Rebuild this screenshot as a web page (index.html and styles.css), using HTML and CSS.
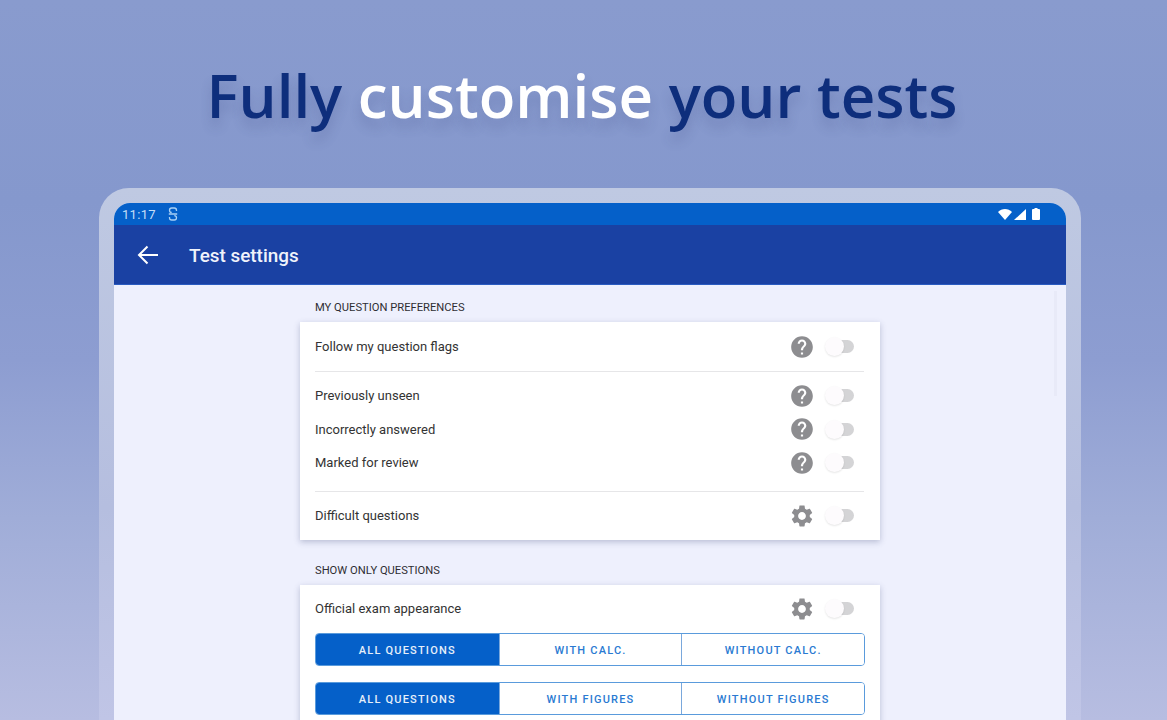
FILE: index.html
```html
<!DOCTYPE html>
<html lang="en">
<head>
    <meta charset="UTF-8">
    <meta name="viewport" content="width=device-width, initial-scale=1.0">
    <title>Test settings</title>
    <link rel="stylesheet" href="styles.css">
</head>
<body>
    <svg class="icon-defs" width="0" height="0">
        <symbol id="help" viewBox="0 0 24 24">
            <path d="M12 2C6.48 2 2 6.48 2 12s4.48 10 10 10 10-4.48 10-10S17.52 2 12 2zm1 17h-2v-2h2v2zm2.07-7.75l-.9.92C13.45 12.9 13 13.5 13 15h-2v-.5c0-1.1.45-2.1 1.17-2.83l1.24-1.26c.37-.36.59-.86.59-1.41 0-1.1-.9-2-2-2s-2 .9-2 2H8c0-2.21 1.79-4 4-4s4 1.79 4 4c0 .88-.36 1.68-.93 2.25z"/>
        </symbol>
        <symbol id="gear" viewBox="0 0 24 24">
            <path d="M19.14 12.94c.04-.3.06-.61.06-.94 0-.32-.02-.64-.07-.94l2.03-1.58c.18-.14.23-.41.12-.61l-1.92-3.32c-.12-.22-.37-.29-.59-.22l-2.39.96c-.5-.38-1.03-.7-1.62-.94l-.36-2.54c-.04-.24-.24-.41-.48-.41h-3.84c-.24 0-.43.17-.47.41l-.36 2.54c-.59.24-1.13.57-1.62.94l-2.39-.96c-.22-.08-.47 0-.59.22L2.74 8.87c-.12.21-.08.47.12.61l2.03 1.58c-.05.3-.09.63-.09.94s.02.64.07.94l-2.03 1.58c-.18.14-.23.41-.12.61l1.92 3.32c.12.22.37.29.59.22l2.39-.96c.5.38 1.03.7 1.62.94l.36 2.54c.05.24.24.41.48.41h3.84c.24 0 .44-.17.47-.41l.36-2.54c.59-.24 1.13-.56 1.62-.94l2.39.96c.22.08.47 0 .59-.22l1.92-3.32c.12-.22.07-.47-.12-.61l-2.01-1.58zM12 15.6c-1.98 0-3.6-1.62-3.6-3.6s1.62-3.6 3.6-3.6 3.6 1.62 3.6 3.6-1.62 3.6-3.6 3.6z"/>
        </symbol>
    </svg>

    <header class="hero">
        <h1><span class="dark">Fully</span> customise <span class="dark">your tests</span></h1>
    </header>

    <div class="tablet">
        <div class="screen">
            <div class="status-bar">
                <div class="status-left">
                    <span>11:17</span>
                    <svg class="status-s" viewBox="0 0 10 14" width="10" height="14">
                        <path d="M8.5 4V3.2C8.5 2 7.5 1 6.3 1H3.7C2.5 1 1.5 2 1.5 3.2S2.5 5.4 3.7 5.4M1.5 10v.8C1.5 12 2.5 13 3.7 13h2.6c1.200 0 2.200-1 2.200-2.200S7.500 8.600 6.300 8.600M.8 7h8.400" fill="none" stroke="#a9d0f5" stroke-width="1.3"/>
                    </svg>
                </div>
                <div class="status-right">
                    <svg class="wifi" viewBox="0 0 14 11" width="14" height="11"><path d="M0 3C1.900 1.100 4.300 0 7 0s5.100 1.100 7 3L7 11z" fill="#fff"/></svg>
                    <svg class="signal" viewBox="0 0 12 11" width="12" height="11"><path d="M12 0v11H0z" fill="#fff"/></svg>
                    <svg viewBox="0 0 8 12" width="8" height="12"><path d="M2.500 0h3v1H7a1 1 0 0 1 1 1v9a1 1 0 0 1-1 1H1a1 1 0 0 1-1-1V2a1 1 0 0 1 1-1h1.500z" fill="#fff"/></svg>
                </div>
            </div>

            <div class="app-bar">
                <svg class="back" viewBox="0 0 24 24" width="24" height="24">
                    <path d="M22 12H3.500M11.500 3.500L3 12l8.500 8.500" fill="none" stroke="#fff" stroke-width="2"/>
                </svg>
                <span class="app-title">Test settings</span>
            </div>

            <main class="content">
                <div class="column">
                    <h2 class="section-label">MY QUESTION PREFERENCES</h2>
                    <section class="card">
                        <div class="row row-single">
                            <span>Follow my question flags</span>
                            <div class="controls">
                                <svg class="ctl-icon"><use href="#help"/></svg>
                                <span class="switch"></span>
                            </div>
                        </div>
                        <hr>
                        <div class="group">
                            <div class="row">
                                <span>Previously unseen</span>
                                <div class="controls">
                                    <svg class="ctl-icon"><use href="#help"/></svg>
                                    <span class="switch"></span>
                                </div>
                            </div>
                            <div class="row">
                                <span>Incorrectly answered</span>
                                <div class="controls">
                                    <svg class="ctl-icon"><use href="#help"/></svg>
                                    <span class="switch"></span>
                                </div>
                            </div>
                            <div class="row">
                                <span>Marked for review</span>
                                <div class="controls">
                                    <svg class="ctl-icon"><use href="#help"/></svg>
                                    <span class="switch"></span>
                                </div>
                            </div>
                        </div>
                        <hr>
                        <div class="row row-last">
                            <span>Difficult questions</span>
                            <div class="controls">
                                <svg class="ctl-icon"><use href="#gear"/></svg>
                                <span class="switch"></span>
                            </div>
                        </div>
                    </section>

                    <h2 class="section-label section-second">SHOW ONLY QUESTIONS</h2>
                    <section class="card card-open">
                        <div class="row row-top">
                            <span>Official exam appearance</span>
                            <div class="controls">
                                <svg class="ctl-icon"><use href="#gear"/></svg>
                                <span class="switch"></span>
                            </div>
                        </div>
                        <div class="segments">
                            <button class="active">ALL QUESTIONS</button>
                            <button>WITH CALC.</button>
                            <button>WITHOUT CALC.</button>
                        </div>
                        <div class="segments">
                            <button class="active">ALL QUESTIONS</button>
                            <button>WITH FIGURES</button>
                            <button>WITHOUT FIGURES</button>
                        </div>
                    </section>
                </div>
                <div class="scrollbar"></div>
            </main>
        </div>
    </div>
</body>
</html>
```

FILE: styles.css
```css
body {
    margin: 0;
    height: 720px;
    overflow: hidden;
    font-family: Roboto, sans-serif;
    background: linear-gradient(180deg, #899bce 0%, #8598cd 28%, #8d9dd1 50%, #a0add8 72%, #b7bde1 100%);
}
.icon-defs {
    position: absolute;
}
.hero {
    height: 188px;
    box-sizing: border-box;
    padding-top: 59px;
    text-align: center;
}
.hero h1 {
    margin: 0 3px 0 0;
    font-family: "Open Sans", sans-serif;
    font-size: 60px;
    line-height: 72px;
    font-weight: 600;
    color: #fff;
    text-shadow: 0 9px 12px rgba(50, 60, 120, 0.2);
}
.hero .dark {
    color: #0e2e7c;
}
.tablet {
    width: 982px;
    margin-left: 99px;
    box-sizing: border-box;
    padding: 15px 15px 0;
    height: 532px;
    background: linear-gradient(180deg, #bfc9e2 0%, #b5bedf 60%, #c0c5e6 100%);
    border-radius: 30px 30px 0 0;
}
.screen {
    height: 100%;
    display: flex;
    flex-direction: column;
    border-radius: 16px 16px 0 0;
    overflow: hidden;
    background: #eef0fd;
}
.status-bar {
    flex: 0 0 22px;
    display: flex;
    justify-content: space-between;
    align-items: center;
    padding: 0 26px 0 8px;
    background: #0560c9;
    color: #c5def7;
    font-size: 13px;
    letter-spacing: 0.3px;
}
.status-left {
    display: flex;
    align-items: center;
    gap: 12px;
}
.status-right {
    display: flex;
    align-items: center;
}
.wifi {
    margin-right: 2px;
}
.signal {
    margin-right: 6px;
}
.app-bar {
    flex: 0 0 60px;
    display: flex;
    align-items: center;
    box-sizing: border-box;
    padding-left: 22px;
    background: #1a41a3;
    border-bottom: 1px solid #2a5bc0;
}
.back {
    margin-right: 29px;
}
.app-title {
    padding-top: 2px;
    color: #f0f3fb;
    font-size: 18.9px;
    font-weight: 500;
}
.content {
    flex: 1;
    position: relative;
    display: flex;
    justify-content: center;
}
.column {
    width: 580px;
}
.section-label {
    margin: 0;
    height: 37px;
    box-sizing: border-box;
    padding: 16px 0 0 15px;
    font-size: 11.2px;
    line-height: 14px;
    font-weight: 400;
    color: #2e2e33;
}
.section-second {
    height: 45px;
    padding-top: 24px;
}
.card {
    background: #fff;
    box-shadow: 0 2px 6px rgba(60, 70, 120, 0.3);
    padding: 0 15px;
    height: 218px;
    box-sizing: border-box;
    font-size: 13px;
    color: #333;
}
.card-open {
    height: auto;
    padding-bottom: 20px;
}
.row {
    height: 33.5px;
    display: flex;
    justify-content: space-between;
    align-items: center;
}
.row-single {
    height: 49px;
}
.row-last {
    height: 48px;
}
.row-top {
    height: 48px;
    padding-bottom: 1px;
    box-sizing: border-box;
}
.card hr {
    margin: 0 1px 0 0;
    border: 0;
    border-top: 1px solid #e6e6e8;
}
.group {
    padding: 7px 0 11px;
}
.controls {
    display: flex;
    align-items: center;
    gap: 11px;
    margin-right: 11px;
}
.ctl-icon {
    width: 26px;
    height: 26px;
    fill: #8d8d90;
}
.switch {
    position: relative;
    display: block;
    width: 28px;
    height: 13px;
    border-radius: 7px;
    background: #d4d4d6;
}
.switch::before {
    content: "";
    position: absolute;
    left: -1px;
    top: -3px;
    width: 19px;
    height: 19px;
    border-radius: 50%;
    background: #fdfbfd;
    box-shadow: 0 1px 2px rgba(0, 0, 0, 0.1);
}
.segments {
    display: grid;
    grid-template-columns: repeat(3, 1fr);
    height: 33px;
    box-sizing: border-box;
    margin-bottom: 16px;
    border: 1px solid #5a9bdc;
    border-radius: 4px;
    overflow: hidden;
}
.segments:last-child {
    margin-bottom: 0;
}
.segments button {
    border: 0;
    border-left: 1px solid #7aa8dc;
    padding: 1px 0 0;
    background: #fff;
    color: #2a7ad2;
    font-family: Roboto, sans-serif;
    font-size: 11px;
    font-weight: 500;
    letter-spacing: 1.2px;
}
.segments button.active {
    border-left: 0;
    background: #0560c9;
    color: #e6effa;
}
.scrollbar {
    position: absolute;
    top: 6px;
    right: 9px;
    width: 3px;
    height: 105px;
    background: #e8eaf8;
}
```
